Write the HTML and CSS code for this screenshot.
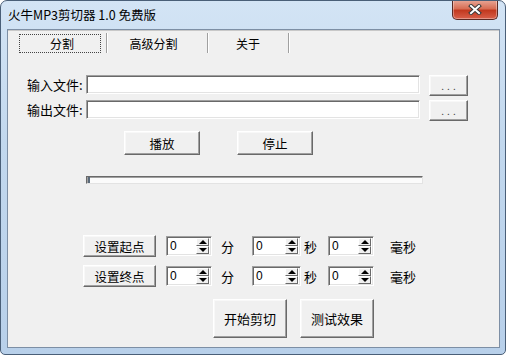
FILE: index.html
```
<!DOCTYPE html>
<html>

<head>
    <meta charset="UTF-8">
    <title>火牛MP3剪切器 1.0 免费版</title>
    <link rel="stylesheet" href="styles.css">
</head>

<body>
    <div class="window">
        <div class="titlebar">
            <span class="title">火牛MP3剪切器 1.0 免费版</span>
            <div class="close">
                <svg width="14" height="11" viewBox="0 0 14 11">
                    <path d="M3 2 L11 9 M11 2 L3 9" stroke="#3a3a3a" stroke-width="4" stroke-linecap="square" fill="none" />
                    <path d="M3 2 L11 9 M11 2 L3 9" stroke="#ffffff" stroke-width="2" stroke-linecap="square" fill="none" />
                </svg>
            </div>
        </div>

        <div class="client">
            <div class="tabs">
                <div class="tab tab1"><span class="focus">分割</span></div>
                <div class="tab tab2">高级分割</div>
                <div class="tab tab3">关于</div>
            </div>

            <div class="panel">
                <div class="file-row first">
                    <span class="label">输入文件:</span>
                    <div class="field"></div>
                    <div class="btn browse">...</div>
                </div>
                <div class="file-row">
                    <span class="label">输出文件:</span>
                    <div class="field"></div>
                    <div class="btn browse">...</div>
                </div>

                <div class="play-row">
                    <div class="btn play">播放</div>
                    <div class="btn play">停止</div>
                </div>

                <div class="progress"></div>

                <div class="time-row first">
                    <div class="btn set">设置起点</div>
                    <div class="spin s1"><span>0</span><div class="arrows"><i class="up"></i><i class="down"></i></div></div>
                    <span class="unit u1">分</span>
                    <div class="spin s2"><span>0</span><div class="arrows"><i class="up"></i><i class="down"></i></div></div>
                    <span class="unit u2">秒</span>
                    <div class="spin s3"><span>0</span><div class="arrows"><i class="up"></i><i class="down"></i></div></div>
                    <span class="unit u3">毫秒</span>
                </div>
                <div class="time-row">
                    <div class="btn set">设置终点</div>
                    <div class="spin s1"><span>0</span><div class="arrows"><i class="up"></i><i class="down"></i></div></div>
                    <span class="unit u1">分</span>
                    <div class="spin s2"><span>0</span><div class="arrows"><i class="up"></i><i class="down"></i></div></div>
                    <span class="unit u2">秒</span>
                    <div class="spin s3"><span>0</span><div class="arrows"><i class="up"></i><i class="down"></i></div></div>
                    <span class="unit u3">毫秒</span>
                </div>

                <div class="action-row">
                    <div class="btn action">开始剪切</div>
                    <div class="btn action">测试效果</div>
                </div>
            </div>
        </div>
    </div>
</body>

</html>
```

FILE: styles.css
```
body {
    margin: 0;
    font-family: "Noto Sans CJK SC", "Liberation Sans", sans-serif;
    font-size: 12px;
    color: #000;
}

.window {
    width: 506px;
    height: 355px;
    box-sizing: border-box;
    border: 1px solid #4a5f78;
    border-radius: 7px 7px 5px 5px;
    background: linear-gradient(180deg, #d3e4f5 0%, #c2d8ee 40%, #b8d0ea 100%);
    display: flex;
    flex-direction: column;
    overflow: hidden;
}

/* title bar */
.titlebar {
    height: 28px;
    display: flex;
    align-items: center;
    padding-left: 7px;
    flex-shrink: 0;
}

.title {
    font-size: 12.5px;
    flex: 1;
    margin-top: -1px;
}

.close {
    align-self: flex-start;
    margin-top: -1px;
    margin-right: 7px;
    width: 44px;
    height: 19px;
    border: 1px solid #5b2a24;
    border-top: none;
    border-radius: 0 0 5px 5px;
    background: linear-gradient(180deg, #e9a898 0%, #d86e55 45%, #c2391f 55%, #d9604a 100%);
    box-shadow: inset 0 0 0 1px rgba(255, 255, 255, 0.35);
    display: flex;
    align-items: center;
    justify-content: center;
}

/* client area */
.client {
    flex: 1;
    margin: 0 5px 6px 6px;
    border: 1px solid #7d8fa5;
    background: #f0f0f0;
    display: flex;
    flex-direction: column;
}

.tabs {
    display: flex;
    height: 22px;
    border-top: 1px solid #c8c8c8;
}

.tab {
    box-sizing: border-box;
    display: flex;
    align-items: center;
    justify-content: center;
    border-right: 1px solid #a0a0a0;
    box-shadow: 1px 0 #fff;
    margin: 2px 0 0 0;
    height: 20px;
}

.tab1 {
    width: 99px;
    justify-content: flex-start;
}

.tab2 {
    width: 101px;
    padding-right: 7px;
}

.tab3 {
    width: 81px;
}

.focus {
    box-sizing: border-box;
    margin-left: 11px;
    width: 82px;
    height: 19px;
    border: 1px dotted #444;
    display: flex;
    align-items: center;
    justify-content: center;
    padding-left: 4px;
}

/* controls */
.btn {
    box-sizing: border-box;
    background: #f0f0f0;
    border: 1px solid;
    border-color: #fff #696969 #696969 #fff;
    box-shadow: inset -1px -1px #a0a0a0, inset 1px 1px #f8f8f8;
    display: flex;
    align-items: center;
    justify-content: center;
    font-size: 12.5px;
}

.field {
    box-sizing: border-box;
    background: #fff;
    border: 1px solid;
    border-color: #a0a0a0 #fff #fff #a0a0a0;
    box-shadow: inset 1px 1px #696969, inset -1px -1px #e3e3e3;
}

.file-row {
    display: flex;
    margin: 4px 0 0 19px;
}

.file-row.first {
    margin-top: 22px;
}

.label {
    width: 59px;
    line-height: 19px;
    font-size: 13px;
}

.file-row .field {
    width: 334px;
    height: 19px;
}

.browse {
    width: 39px;
    height: 21px;
    margin-left: 9px;
    font-size: 10px;
    letter-spacing: 3px;
    padding-left: 3px;
    color: #444;
}

.play-row {
    display: flex;
    gap: 37px;
    margin: 10px 0 0 116px;
}

.play {
    width: 76px;
    height: 24px;
}

.progress {
    position: relative;
    box-sizing: border-box;
    width: 337px;
    height: 8px;
    margin: 21px 0 0 78px;
    background: #fbfbfb;
    border: 1px solid;
    border-color: #696969 #e3e3e3 #e3e3e3 #696969;
    box-shadow: inset 1px 1px #a0a0a0;
}

.progress::before {
    content: "";
    position: absolute;
    left: 1px;
    top: 0;
    width: 2px;
    height: 6px;
    background: #5a6a7a;
}

.time-row {
    display: flex;
    align-items: center;
    margin: 8px 0 0 75px;
    height: 22px;
}

.time-row.first {
    margin-top: 51px;
}

.set {
    width: 73px;
    height: 22px;
}

.spin {
    box-sizing: border-box;
    height: 20px;
    background: #fff;
    border: 1px solid;
    border-color: #a0a0a0 #fff #fff #a0a0a0;
    box-shadow: inset 1px 1px #696969, inset -1px -1px #e3e3e3;
    display: flex;
    align-items: center;
    justify-content: space-between;
    padding: 2px 2px 2px 3px;
    font-family: "Liberation Sans", sans-serif;
    font-size: 12px;
}

.s1 {
    width: 46px;
    margin-left: 10px;
}

.s2 {
    width: 49px;
}

.s3 {
    width: 46px;
}

.arrows {
    display: flex;
    flex-direction: column;
    width: 13px;
    height: 16px;
}

.arrows i {
    box-sizing: border-box;
    flex: 1;
    background: #f0f0f0;
    border: 1px solid;
    border-color: #fff #696969 #696969 #fff;
    display: flex;
    align-items: center;
    justify-content: center;
}

.arrows i::before {
    content: "";
    border-left: 4px solid transparent;
    border-right: 4px solid transparent;
}

.arrows .up::before {
    border-bottom: 4px solid #000;
}

.arrows .down::before {
    border-top: 4px solid #000;
}

.unit {
    font-size: 13px;
}

.u1 {
    width: 31px;
    padding-left: 9px;
}

.u2 {
    width: 24px;
    padding-left: 3px;
}

.u3 {
    padding-left: 16px;
}

.action-row {
    display: flex;
    gap: 13px;
    margin: 12px 0 0 205px;
}

.action {
    width: 74px;
    height: 39px;
    font-size: 13px;
}
```
